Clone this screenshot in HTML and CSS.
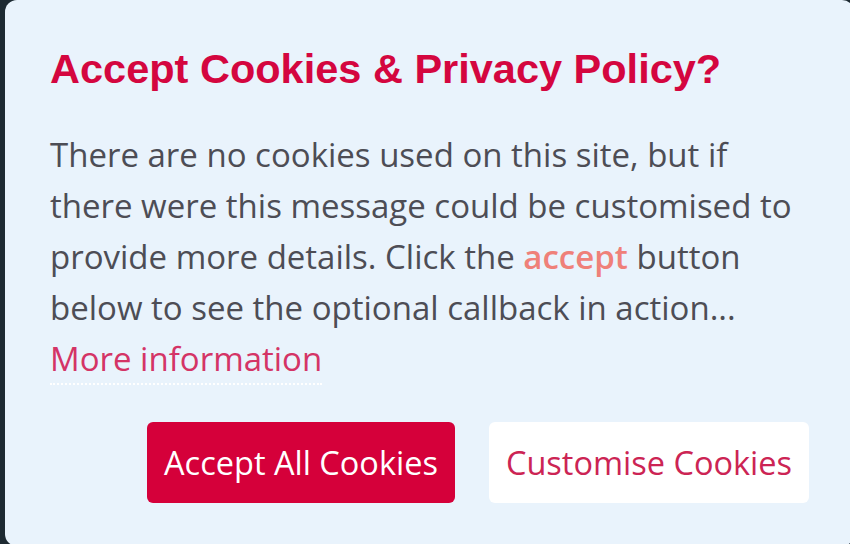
FILE: index.html
```html
<!DOCTYPE html>
<html lang="en">
<head>
    <meta charset="UTF-8">
    <meta name="viewport" content="width=device-width, initial-scale=1.0">
    <title>Cookie Consent</title>
    <link rel="stylesheet" href="styles.css">
</head>
<body>
    <div class="cookie-card">
        <h2 class="cookie-title">Accept Cookies &amp; Privacy Policy?</h2>
        <p class="cookie-text">
            There are no cookies used on this site, but if there were this message could be customised to provide more details. Click the <strong class="accent">accept</strong> button below to see the optional callback in action...
            <a href="#" class="more-link">More information</a>
        </p>
        <div class="cookie-actions">
            <button class="btn btn-accept">Accept All Cookies</button>
            <button class="btn btn-customise">Customise Cookies</button>
        </div>
    </div>
</body>
</html>
```

FILE: styles.css
```css
html, body {
    margin: 0;
    height: 100%;
    overflow: hidden;
}
body {
    background-color: #1d2a32;
    font-family: "Open Sans", "Noto Sans", sans-serif;
}
.cookie-card {
    box-sizing: border-box;
    width: 849px;
    height: 546px;
    margin-left: 5px;
    padding: 45px 45px 0 45px;
    background-color: #e9f3fc;
    border-radius: 12px;
}
.cookie-title {
    margin: 0;
    font-family: "Liberation Sans", Arial, sans-serif;
    font-size: 41.5px;
    line-height: 47px;
    font-weight: bold;
    color: #d4063f;
}
.cookie-text {
    margin: 37px 0 0 0;
    font-size: 33px;
    line-height: 51px;
    color: #4d4d55;
}
.accent {
    color: #ef8079;
    font-weight: 600;
}
.more-link {
    display: inline-block;
    line-height: 1;
    padding-bottom: 8px;
    color: #d43466;
    text-decoration: none;
    border-bottom: 2px dotted #ffffff;
}
.cookie-actions {
    display: flex;
    justify-content: flex-end;
    gap: 34px;
    margin-top: 37px;
}
.btn {
    height: 81px;
    padding: 0 17px;
    font-family: "Open Sans", "Noto Sans", sans-serif;
    font-size: 32.5px;
    border: none;
    border-radius: 6px;
    cursor: pointer;
}
.btn-accept {
    background-color: #d5003a;
    color: #ffffff;
}
.btn-customise {
    background-color: #ffffff;
    color: #cc2454;
}
```
